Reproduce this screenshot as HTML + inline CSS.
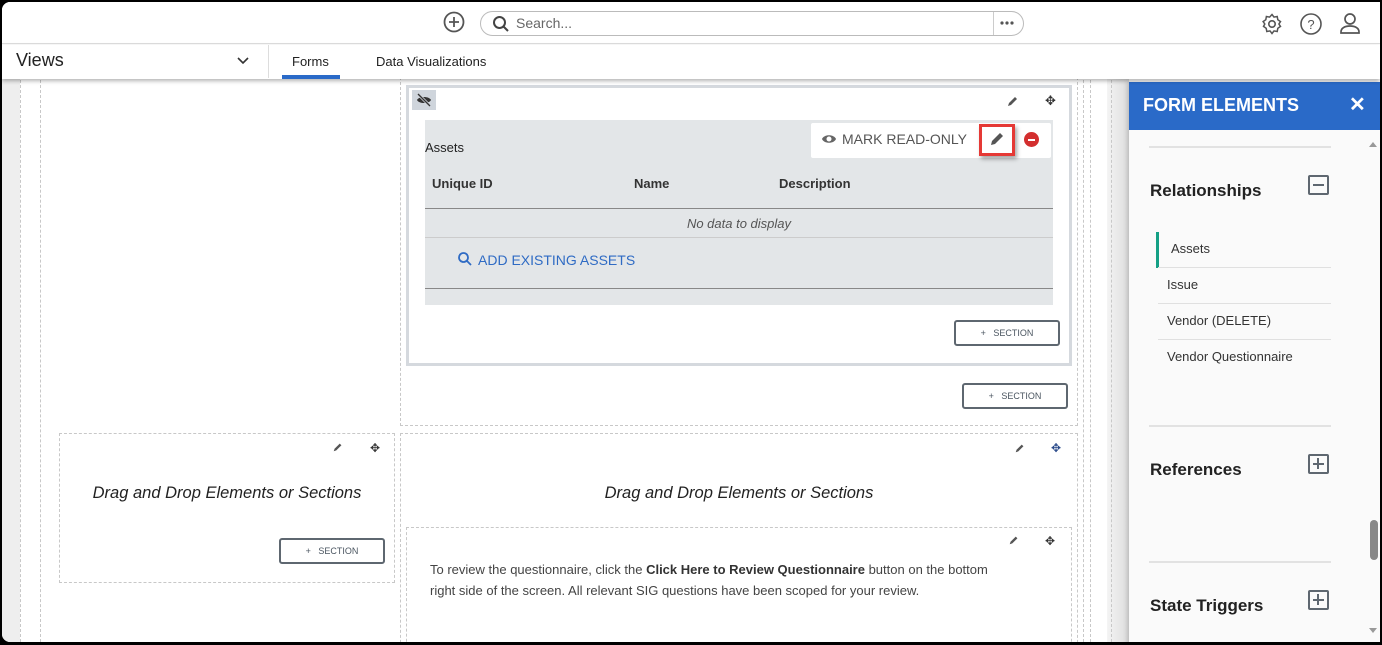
<!DOCTYPE html>
<html><head><style>
*{box-sizing:border-box;margin:0;padding:0}
body{width:1382px;height:645px;overflow:hidden;background:#000;font-family:"Liberation Sans",sans-serif;position:relative}
.abs{position:absolute}
#page{position:absolute;left:2px;top:2px;width:1378px;height:640px;background:#fff;overflow:hidden;border-radius:8px 0 0 8px}
.d{position:absolute;border:1px dashed #c8c8c8}
.vl{position:absolute;border-left:1px dashed #c8c8c8;top:78px;bottom:0}
.btn{position:absolute;width:106px;height:26px;border:2px solid #5e6770;border-radius:3px;font-size:9px;color:#4a5560;text-align:center;line-height:22px;background:#fff}
.ico{position:absolute;font-size:12px;color:#555}
</style></head><body>
<div id="page">
<div class="abs" style="left:0;top:0;width:1378px;height:42px;background:#fff;border-bottom:1px solid #ddd"></div>
<svg class="abs" style="left:440px;top:8px" width="24" height="24" viewBox="0 0 24 24"><circle cx="12" cy="12" r="9.5" fill="none" stroke="#555" stroke-width="1.8"/><path d="M12 7v10M7 12h10" stroke="#555" stroke-width="1.8"/></svg>
<div class="abs" style="left:478px;top:9px;width:544px;height:25px;border:1px solid #bbb;border-radius:13px"></div>
<svg class="abs" style="left:490px;top:13px" width="18" height="18" viewBox="0 0 18 18"><circle cx="7.5" cy="7.5" r="5.5" fill="none" stroke="#444" stroke-width="2"/><path d="M11.5 11.5l4.5 4.5" stroke="#444" stroke-width="2"/></svg>
<div class="abs" style="left:514px;top:13px;font-size:14px;color:#666">Search...</div>
<div class="abs" style="left:991px;top:10px;width:1px;height:23px;background:#ccc"></div>
<svg class="abs" style="left:997px;top:18px" width="16" height="6" viewBox="0 0 16 6"><circle cx="3" cy="3" r="1.6" fill="#555"/><circle cx="8" cy="3" r="1.6" fill="#555"/><circle cx="13" cy="3" r="1.6" fill="#555"/></svg>
<svg class="abs" style="left:1258px;top:10px" width="24" height="24" viewBox="0 0 24 24"><circle cx="12" cy="12" r="3.2" fill="none" stroke="#555" stroke-width="1.6"/><path d="M12 2.5l2 2.6 3.2-.6.6 3.2 2.7 1.9-1.6 2.4 1.6 2.4-2.7 1.9-.6 3.2-3.2-.6-2 2.6-2-2.6-3.2.6-.6-3.2-2.7-1.9L4.8 12 3.1 9.6l2.7-1.9.6-3.2 3.2.6z" fill="none" stroke="#555" stroke-width="1.5"/></svg>
<svg class="abs" style="left:1297px;top:10px" width="24" height="24" viewBox="0 0 24 24"><circle cx="12" cy="12" r="10" fill="none" stroke="#555" stroke-width="1.6"/><text x="12" y="17" font-size="13" text-anchor="middle" fill="#555" font-family="Liberation Sans">?</text></svg>
<svg class="abs" style="left:1336px;top:9px" width="24" height="24" viewBox="0 0 24 24"><circle cx="12" cy="8" r="5" fill="none" stroke="#555" stroke-width="1.7"/><path d="M3 22v-1c0-4 4-6 9-6s9 2 9 6v1z" fill="none" stroke="#555" stroke-width="1.7"/></svg>
<div class="abs" style="left:0;top:43px;width:1378px;height:34px;background:#fff;box-shadow:0 2px 4px rgba(0,0,0,.3);z-index:5">
 <div class="abs" style="left:14px;top:5px;font-size:18px;color:#222">Views</div>
 <svg class="abs" style="left:234px;top:11px" width="14" height="10" viewBox="0 0 14 10"><path d="M2 2l5 5 5-5" fill="none" stroke="#333" stroke-width="1.6"/></svg>
 <div class="abs" style="left:266px;top:0;width:1px;height:33px;background:#ddd"></div>
 <div class="abs" style="left:290px;top:9px;font-size:13px;color:#222">Forms</div>
 <div class="abs" style="left:280px;top:30px;width:58px;height:4px;background:#2a6ac8"></div>
 <div class="abs" style="left:374px;top:9px;font-size:13px;color:#222">Data Visualizations</div>
</div>
<div class="abs" style="left:0;top:77px;width:18px;height:570px;background:#eee"></div>
<div class="vl" style="left:18px"></div>
<div class="vl" style="left:38px"></div>
<div class="vl" style="left:1081px"></div>
<div class="vl" style="left:1088px"></div>
<div class="abs" style="left:1105px;top:77px;width:22px;height:570px;background:linear-gradient(90deg,#f4f4f4,#ddd)"></div>
<div class="vl" style="left:1109px"></div>
<div class="d" style="left:398px;top:70px;width:678px;height:354px"></div>
<div class="abs" style="left:404px;top:83px;width:666px;height:281px;border:3px solid #d5d9de;background:#fff"></div>
<div class="abs" style="left:410px;top:88px;width:24px;height:20px;background:#cfd5dc"></div>
<svg class="abs" style="left:414px;top:90px" width="16" height="16" viewBox="0 0 16 16"><path d="M1 8c2-4 12-4 14 0-2 4-12 4-14 0z" fill="#333"/><path d="M2 2l12 12" stroke="#cfd5dc" stroke-width="3"/><path d="M2 2l12 12" stroke="#333" stroke-width="1.3"/></svg>
<svg class="ico" style="left:1004px;top:92px" width="14" height="14" viewBox="0 0 14 14"><path d="M2 12l1-3 6-6 2 2-6 6z" fill="#555"/></svg>
<div class="ico" style="left:1043px;top:91px;font-size:13px;color:#333">✥</div>
<div class="abs" style="left:423px;top:118px;width:628px;height:185px;background:#e3e6e8"></div>
<div class="abs" style="left:423px;top:138px;font-size:13px;color:#222">Assets</div>
<div class="abs" style="left:809px;top:121px;width:240px;height:35px;background:#fff;border-radius:2px"></div>
<svg class="abs" style="left:819px;top:130px" width="16" height="14" viewBox="0 0 16 14"><path d="M1 7c2-5 12-5 14 0-2 5-12 5-14 0z" fill="#666"/><circle cx="8" cy="7" r="2.5" fill="#fff"/></svg>
<div class="abs" style="left:840px;top:129px;font-size:14px;color:#555">MARK READ-ONLY</div>
<div class="abs" style="left:977px;top:122px;width:36px;height:32px;border:3px solid #e53935;box-shadow:2px 3px 4px rgba(0,0,0,.35);background:#fff"></div>
<svg class="abs" style="left:986px;top:128px" width="18" height="18" viewBox="0 0 18 18"><path d="M3 15l1-4 8-8 3 3-8 8z" fill="#555"/></svg>
<div class="abs" style="left:1022px;top:130px;width:15px;height:15px;border-radius:50%;background:#d32f2f"></div>
<div class="abs" style="left:1026px;top:137px;width:7px;height:2px;background:#fff"></div>
<div class="abs" style="left:430px;top:174px;font-size:13px;font-weight:bold;color:#333">Unique ID</div>
<div class="abs" style="left:632px;top:174px;font-size:13px;font-weight:bold;color:#333">Name</div>
<div class="abs" style="left:777px;top:174px;font-size:13px;font-weight:bold;color:#333">Description</div>
<div class="abs" style="left:423px;top:206px;width:628px;height:1px;background:#888"></div>
<div class="abs" style="left:423px;top:214px;width:628px;text-align:center;font-size:13px;font-style:italic;color:#555">No data to display</div>
<div class="abs" style="left:423px;top:235px;width:628px;height:1px;background:#ccc"></div>
<svg class="abs" style="left:455px;top:249px" width="16" height="16" viewBox="0 0 16 16"><circle cx="6.5" cy="6.5" r="4.5" fill="none" stroke="#2f6bc4" stroke-width="1.8"/><path d="M10 10l4 4" stroke="#2f6bc4" stroke-width="1.8"/></svg>
<div class="abs" style="left:476px;top:250px;font-size:14px;color:#2f6bc4">ADD EXISTING ASSETS</div>
<div class="abs" style="left:423px;top:286px;width:628px;height:1px;background:#888"></div>
<div class="btn" style="left:952px;top:318px">+&nbsp;&nbsp; SECTION</div>
<div class="btn" style="left:960px;top:381px">+&nbsp;&nbsp; SECTION</div>
<div class="d" style="left:57px;top:431px;width:336px;height:150px"></div>
<svg class="ico" style="left:330px;top:439px" width="12" height="12" viewBox="0 0 14 14"><path d="M2 12l1-3 6-6 2 2-6 6z" fill="#555"/></svg>
<div class="ico" style="left:368px;top:439px;font-size:12px;color:#333">✥</div>
<div class="abs" style="left:57px;top:482px;width:336px;text-align:center;font-size:16.5px;font-style:italic;color:#222">Drag and Drop Elements or Sections</div>
<div class="btn" style="left:277px;top:536px">+&nbsp;&nbsp; SECTION</div>
<div class="d" style="left:398px;top:431px;width:678px;height:220px"></div>
<svg class="ico" style="left:1012px;top:440px" width="12" height="12" viewBox="0 0 14 14"><path d="M2 12l1-3 6-6 2 2-6 6z" fill="#555"/></svg>
<div class="ico" style="left:1049px;top:439px;font-size:12px;color:#2a4a8a">✥</div>
<div class="abs" style="left:398px;top:482px;width:678px;text-align:center;font-size:16.5px;font-style:italic;color:#222">Drag and Drop Elements or Sections</div>
<div class="d" style="left:404px;top:525px;width:666px;height:130px"></div>
<svg class="ico" style="left:1006px;top:532px" width="12" height="12" viewBox="0 0 14 14"><path d="M2 12l1-3 6-6 2 2-6 6z" fill="#555"/></svg>
<div class="ico" style="left:1043px;top:532px;font-size:12px;color:#333">✥</div>
<div class="abs" style="left:428px;top:557px;width:610px;font-size:13px;line-height:21px;color:#444">To review the questionnaire, click the <b style="color:#333">Click Here to Review Questionnaire</b> button on the bottom<br>right side of the screen. All relevant SIG questions have been scoped for your review.</div>
<div class="abs" style="left:1127px;top:80px;width:251px;height:570px;background:#fafafa;box-shadow:-2px 0 4px rgba(0,0,0,.15)"></div>
<div class="abs" style="left:1127px;top:80px;width:251px;height:48px;background:#2a6ac8"></div>
<div class="abs" style="left:1141px;top:93px;font-size:18px;font-weight:bold;color:#fff">FORM ELEMENTS</div>
<div class="abs" style="left:1347px;top:90px;font-size:20px;font-weight:bold;color:#fff">✕</div>
<div class="abs" style="left:1147px;top:144px;width:182px;height:2px;background:#e2e2e2"></div>
<div class="abs" style="left:1148px;top:179px;font-size:17px;font-weight:bold;color:#222">Relationships</div>
<div class="abs" style="left:1306px;top:173px;width:21px;height:20px;border:2px solid #5e6770;border-radius:2px"></div>
<div class="abs" style="left:1311px;top:182px;width:11px;height:2px;background:#5e6770"></div>
<div class="abs" style="left:1154px;top:230px;width:3px;height:36px;background:#14a085"></div>
<div class="abs" style="left:1169px;top:239px;font-size:13px;color:#333">Assets</div>
<div class="abs" style="left:1156px;top:265px;width:173px;height:1px;background:#e0e0e0"></div>
<div class="abs" style="left:1165px;top:275px;font-size:13px;color:#333">Issue</div>
<div class="abs" style="left:1156px;top:301px;width:173px;height:1px;background:#e0e0e0"></div>
<div class="abs" style="left:1165px;top:311px;font-size:13px;color:#333">Vendor (DELETE)</div>
<div class="abs" style="left:1156px;top:337px;width:173px;height:1px;background:#e0e0e0"></div>
<div class="abs" style="left:1165px;top:347px;font-size:13px;color:#333">Vendor Questionnaire</div>
<div class="abs" style="left:1147px;top:423px;width:182px;height:2px;background:#e2e2e2"></div>
<div class="abs" style="left:1148px;top:458px;font-size:17px;font-weight:bold;color:#222">References</div>
<div class="abs" style="left:1306px;top:452px;width:21px;height:20px;border:2px solid #5e6770;border-radius:2px"></div>
<div class="abs" style="left:1311px;top:461px;width:11px;height:2px;background:#5e6770"></div>
<div class="abs" style="left:1315px;top:456px;width:2px;height:11px;background:#5e6770"></div>
<div class="abs" style="left:1147px;top:559px;width:182px;height:2px;background:#e2e2e2"></div>
<div class="abs" style="left:1148px;top:594px;font-size:17px;font-weight:bold;color:#222">State Triggers</div>
<div class="abs" style="left:1306px;top:588px;width:21px;height:20px;border:2px solid #5e6770;border-radius:2px"></div>
<div class="abs" style="left:1311px;top:597px;width:11px;height:2px;background:#5e6770"></div>
<div class="abs" style="left:1315px;top:592px;width:2px;height:11px;background:#5e6770"></div>
<div class="abs" style="left:1367px;top:140px;width:0;height:0;border:4px solid transparent;border-bottom:5px solid #999;border-top:0"></div>
<div class="abs" style="left:1367px;top:626px;width:0;height:0;border:4px solid transparent;border-top:5px solid #999;border-bottom:0"></div>
<div class="abs" style="left:1368px;top:518px;width:8px;height:40px;border-radius:4px;background:#888"></div>
</div>
</body></html>
